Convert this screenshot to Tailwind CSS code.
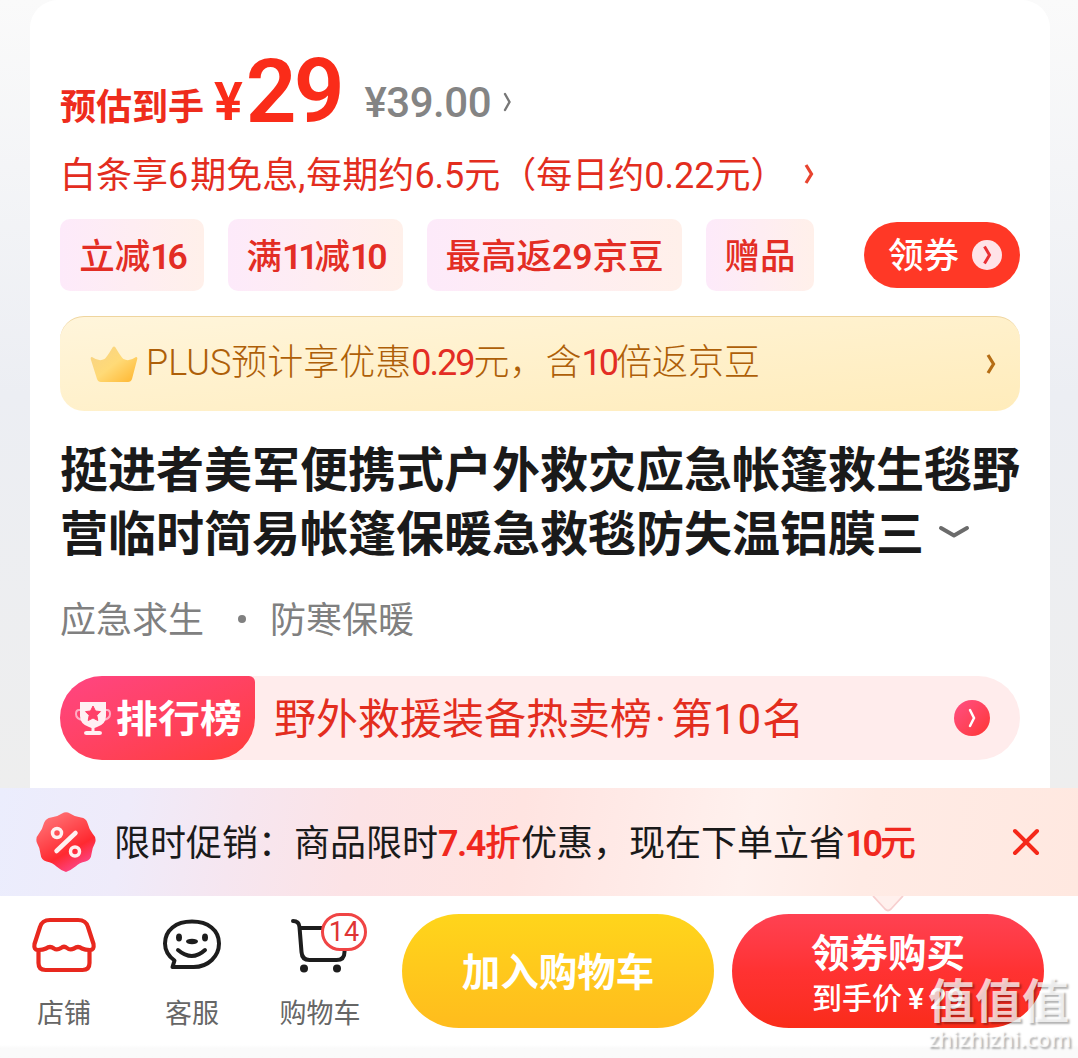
<!DOCTYPE html>
<html lang="zh-CN">
<head>
<meta charset="utf-8">
<title>商品详情</title>
<script src="https://cdn.jsdelivr.net/npm/@tailwindcss/browser@4"></script>
</head>
<body class="w-[1078px] h-[1058px] overflow-hidden whitespace-nowrap bg-white font-['Noto_Sans_CJK_SC',sans-serif]">
<div class="relative flex h-[1058px] flex-col">
  <main class="h-[788px] bg-linear-to-b from-[#fafafa] via-[#eceef3] via-50% to-[#eeeeee] pr-[28px] pl-[30px]">
    <section class="flex h-[788px] flex-col rounded-t-[28px] bg-white px-[30px]">
      <!-- price -->
      <div class="flex h-[144px] items-baseline pt-[39px] text-[#fa2c19]">
        <span class="text-[36px] leading-[130px] font-bold text-[#ee2c1c]">预估到手</span>
        <span class="ml-[10px] font-[Roboto] text-[54px] leading-none font-semibold">¥</span>
        <span class="ml-[3px] translate-y-[2px] font-[Roboto] text-[89px] leading-none font-semibold tracking-[-3px]">29</span>
        <span class="ml-[23px] translate-y-[-3px] font-[Roboto] text-[42px] leading-none font-medium tracking-[-0.500px] text-[#848484]">¥39.00</span>
        <svg class="mt-[53px] ml-[12px] self-start" width="9" height="20" viewBox="0 0 9 20" fill="none" stroke="#777" stroke-width="2.4" stroke-linecap="round"><path d="M2 2l4.500 8L2 18"/></svg>
      </div>
      <!-- instalments -->
      <div class="flex h-[60px] items-center text-[36px] leading-[60px] text-[#e32d1e]">
        <span>白条享<span class="font-[Roboto] tracking-[2px]">6</span>期免息<span class="font-[Roboto] tracking-[1px]">,</span>每期约<span class="font-[Roboto]">6.5</span>元（每日约<span class="font-[Roboto]">0.22</span>元）</span>
        <svg class="ml-[17px]" width="11" height="20" viewBox="0 0 11 20" fill="none" stroke="#e8442f" stroke-width="3.200"><path d="M2 1l5.500 9L2 19"/></svg>
      </div>
      <!-- coupons -->
      <div class="mt-[15px] flex h-[72px] items-center gap-6 text-[35.500px] leading-[69px] font-medium text-[#e32d24]">
        <span class="h-[72px] w-[144px] rounded-[10px] bg-linear-to-r from-[#fdeafa] to-[#fff0ea] text-center">立减<span class="font-[Roboto] font-semibold tracking-[-3px]">16</span></span>
        <span class="h-[72px] w-[175px] rounded-[10px] bg-linear-to-r from-[#fdeafa] to-[#fff0ea] text-center">满<span class="font-[Roboto] font-semibold tracking-[-4px]">11</span>减<span class="font-[Roboto] font-semibold tracking-[-3px]">10</span></span>
        <span class="h-[72px] w-[255px] rounded-[10px] bg-linear-to-r from-[#fdeafa] to-[#fff0ea] text-center">最高返<span class="font-[Roboto] font-semibold">29</span>京豆</span>
        <span class="h-[72px] w-[108px] rounded-[10px] bg-linear-to-r from-[#fdeafa] to-[#fff0ea] text-center">赠品</span>
        <span class="ml-auto flex h-[66px] w-[156px] items-center rounded-full bg-[#ff3826] pl-[24px] text-white">
          <span class="pb-1 leading-[62px]">领券</span>
          <svg class="ml-[13px]" width="30" height="30" viewBox="0 0 30 30" fill="none"><circle cx="15" cy="15" r="15" fill="#ffe3e8"/><path d="M12.500 6.500l5 8.500-5 8.500" stroke="#e92f34" stroke-width="3"/></svg>
        </span>
      </div>
      <!-- PLUS -->
      <div class="mt-[25px] flex h-[95px] items-center rounded-[24px] border-t border-[#efd59e] bg-linear-to-br from-[#fff5db] to-[#ffecbb] pr-[23px] pl-[30px] text-[36px] leading-[88px] font-light text-[#ae5f08]">
        <svg width="48" height="37" viewBox="0 0 48 37"><defs><linearGradient id="crown" x1="0" y1="0" x2="1" y2="1"><stop offset="0" stop-color="#f7d286"/><stop offset=".5" stop-color="#ffda77"/><stop offset="1" stop-color="#ffb52d"/></linearGradient></defs><path d="M2 11q7 5 12.500 2Q17 11 22.500 1.500q1.500-2 3 0Q31 11 33.500 13q5.500 3 12.500-2 2 0 1 3l-5 19q-1 3-4 3H11q-3 0-4-3L1 14q-1-3 1-3Z" fill="url(#crown)"/></svg>
        <span class="ml-[8px] pb-[6px]"><span class="font-[Roboto]">PLUS</span>预计享优惠<span class="font-[Roboto] font-normal tracking-[-2px] text-[#e32d24]">0.29</span>元，含<span class="font-[Roboto] font-normal tracking-[-3px] text-[#e32d24]">10</span>倍返京豆</span>
        <svg class="ml-auto" width="11" height="20" viewBox="0 0 11 20" fill="none" stroke="#b56d15" stroke-width="3.200"><path d="M2 1l5.500 9L2 19"/></svg>
      </div>
      <!-- title -->
      <h1 class="mt-[23px] flex h-[128px] flex-col text-[48px] leading-[64px] font-bold text-[#1a1a1a]">
        <span>挺进者美军便携式户外救灾应急帐篷救生毯野</span>
        <span class="flex items-center">营临时简易帐篷保暖急救毯防失温铝膜三
          <svg class="mt-[4px] ml-[14px]" width="32" height="14" viewBox="0 0 32 14" fill="none" stroke="#6b6b6b" stroke-width="4" stroke-linecap="round" stroke-linejoin="round"><path d="M3 3l13 7.500L29 3"/></svg>
        </span>
      </h1>
      <div class="mt-[22px] flex h-[66px] items-center text-[36px] leading-[66px] text-[#808080]">
        <span>应急求生</span><i class="mt-[4px] ml-[34px] size-[8px] rounded-full bg-[#808080]"></i><span class="ml-[24px]">防寒保暖</span>
      </div>
      <!-- ranking -->
      <div class="mt-[26px] flex h-[84px] items-center rounded-full bg-[#ffecec] pr-[30px]">
        <div class="flex h-[84px] w-[195px] items-center rounded-l-[42px] rounded-tr-[6px] rounded-br-[42px] bg-linear-to-br from-[#ff4582] to-[#ff3c37] pl-[15px] text-white">
          <svg width="36" height="35" viewBox="0 0 36 35" fill="none"><path d="M7 9H4q-3 0-3 4 0 5 7 6M29 9h3q3 0 3 4 0 5-7 6" stroke="#ffadc4" stroke-width="2"/><path d="M5 1h26v14q0 8-9 11l-2.500 1v3h5q2.500 0 2.500 2t-2.500 2h-13q-2.500 0-2.500-2t2.500-2h5v-3L14 26Q5 23 5 15Z" fill="#fff0f3"/><path d="M18 5l2.500 5 5 .6-3.700 3.700 1 5.200-4.800-2.500-4.800 2.500 1-5.200-3.700-3.700 5-.6Z" fill="#ff4068" stroke="#ff4068" stroke-linejoin="round"/></svg>
          <span class="ml-[5px] scale-y-90 pb-[4px] text-[42px] leading-[80px] font-bold">排行榜</span>
        </div>
        <span class="ml-[19px] text-[42px] leading-[84px] text-[#e32d1e]">野外救援装备热卖榜<span class="ml-[3px] font-[Roboto]">·</span></span><span class="ml-[5px] text-[42px] leading-[84px] text-[#e32d1e]">第<span class="font-[Roboto] tracking-[1px]">10</span>名</span>
        <span class="ml-auto flex size-[36px] items-center justify-center rounded-full bg-linear-to-br from-[#ff4f83] to-[#ff332c]"><svg width="12" height="20" viewBox="0 0 12 20" fill="none" stroke="#fff" stroke-width="2.500" stroke-linecap="round"><path d="M4 2l4 8-4 8"/></svg></span>
      </div>
    </section>
  </main>

  <!-- promotion -->
  <aside class="flex h-[108px] items-center bg-linear-[100deg,#ebedfd_0%,#efebfa_12%,#f6e6f0_22%,#fce3e6_33%,#ffe4e1_48%,#ffebe8_60%,#fff1ee_69%,#ffebe5_80%,#ffe8e0_100%] pr-[36px] pl-[36px] text-[36px] leading-[108px] text-[#1a1a1a]">
    <svg width="60" height="60" viewBox="0 0 60 60"><defs><linearGradient id="seal" x1=".2" y1="0" x2=".75" y2="1"><stop offset="0" stop-color="#ff777a"/><stop offset=".65" stop-color="#ff2930"/><stop offset="1" stop-color="#fc4b9b"/></linearGradient></defs><path d="M26 1.500q4-2.500 8 0 5 3.500 11 4 5 .5 6.500 5.500 1.500 6 5 10.500Q61 26 59 31q-3 5-3.500 11-.5 6-6 7.500-6 1-10 5-5 4-9.500 5.500-5-1.500-9.500-5.500-4-4-10-5-5.500-1.500-6-7.500Q4 36 1 31q-2-5 2-9.500 3.500-4.500 5-10.500Q10 6 15 5.500q6-.5 11-4Z" fill="url(#seal)"/><g fill="none" stroke="#fff0f0" stroke-linecap="round"><path d="M39.500 21l-19 18" stroke-width="4.500"/><circle cx="21" cy="21" r="4.500" stroke-width="3.500"/><circle cx="39" cy="39.500" r="4.500" stroke-width="3.500"/></g></svg>
    <span class="ml-[18px]">限时促销：商品限时<span class="text-[#f0281e]"><span class="font-[Roboto] font-semibold tracking-[-1.500px]">7.4</span><span class="font-medium">折</span></span>优惠，现在下单立省<span class="text-[#f0281e]"><span class="font-[Roboto] font-semibold tracking-[-3px]">10</span><span class="font-medium">元</span></span></span>
    <svg class="ml-auto" width="32" height="28" viewBox="0 0 32 28" stroke="#f52819" stroke-width="4" stroke-linecap="round"><path d="M5 3l22 22M27 3L5 25"/></svg>
  </aside>

  <!-- action bar -->
  <footer class="relative flex h-[162px] bg-linear-to-b from-white from-92% to-[#fafafa] to-94%">
    <nav class="flex h-[162px] w-[384px] text-[27px] leading-[36px] text-[#666]">
      <a class="flex w-[128px] flex-col items-center pt-[20px]">
        <svg width="66" height="58" viewBox="0 0 66 58" fill="none" stroke="#e8281e" stroke-width="4.200" stroke-linecap="round" stroke-linejoin="round"><path d="M19 4h28q8 0 10 7l5.500 17q1 6-3.500 6-5 0-8-1.500-4-3-8 0-4 2-7-.500-3-2.500-6 0-4 2.500-7 .500-4-3-8 0-3 1.500-8 1.500-4.500 0-3.500-6L9 11q2-7 10-7Z"/><path d="M7.500 35v12q0 7 7 7h37q7 0 7-7V35"/></svg>
        <span class="mt-[20px]">店铺</span>
      </a>
      <a class="flex w-[128px] flex-col items-center pt-[20px]">
        <svg width="60" height="58" viewBox="0 0 60 58" fill="none" stroke="#1d1d1d" stroke-width="4" stroke-linecap="round" stroke-linejoin="round"><path d="M10.500 51h21C46.500 51 57 40 57 27.500 57 14 46 5.500 30 5.500S3 14 3 27.500c0 8 4 13 9.500 17Z"/><path d="M16 34q14 12 27 0"/><g fill="#1d1d1d" stroke="none"><ellipse cx="17" cy="21.500" rx="3" ry="4"/><ellipse cx="43" cy="21.500" rx="3" ry="4"/><ellipse cx="30" cy="25.500" rx="6" ry="2.700"/></g></svg>
        <span class="mt-[20px]">客服</span>
      </a>
      <a class="relative flex w-[128px] flex-col items-center pt-[20px]">
        <svg width="58" height="58" viewBox="0 0 58 58" fill="none" stroke="#1d1d1d" stroke-width="4" stroke-linecap="round" stroke-linejoin="round"><path d="M2 5q6 0 6.500 6l2 25q.5 8 8 8h27q8 0 8-8l1-24L9 12"/><g fill="#1d1d1d" stroke="none"><circle cx="13" cy="52.500" r="4"/><circle cx="46" cy="52.500" r="4"/></g></svg>
        <span class="mt-[20px]">购物车</span>
        <b class="absolute top-[17px] left-[65px] flex h-[38px] w-[46px] items-center justify-center rounded-full border-[3px] border-[#f04444] bg-white font-[Roboto] text-[27px] font-normal text-[#df3434]">14</b>
      </a>
    </nav>
    <button class="mt-[18px] ml-[18px] h-[114px] w-[312px] rounded-full bg-linear-to-b from-[#ffd51b] to-[#ffbc1d] pb-[4px] text-[38.500px] leading-[110px] font-bold text-white">加入购物车</button>
    <button class="mt-[18px] ml-[18px] flex h-[114px] w-[312px] flex-col items-center rounded-full bg-linear-to-b from-[#ff4152] via-[#ff3232] via-50% to-[#fa2c19] text-white">
      <span class="mt-[9px] text-[38.500px] leading-[54px] font-bold">领券购买</span>
      <span class="text-[30px] leading-[38px] font-medium">到手价<span class="ml-[6px] font-[Roboto] tracking-[2px]">¥</span><span class="ml-[4px] font-[Roboto] font-semibold">29</span></span>
    </button>
    <svg class="absolute top-0 left-[872px]" width="32" height="16" viewBox="0 0 32 16"><path d="M1 0l12 13q3 3 6 0L31 0" fill="#fff0ed" stroke="#f7cfcf" stroke-width="1.800"/></svg>
    <div class="absolute top-[71px] left-[928px] flex w-[148px] flex-col text-white/75 [text-shadow:2px_2px_2px_rgb(0_0_0/0.3)]">
      <span class="text-[47px] leading-[62px] font-bold">值值值</span>
      <span class="mt-[-5px] font-['Open_Sans'] text-[22px] leading-[28px] font-semibold">zhizhizhi.com</span>
    </div>
  </footer>
</div>
</body>
</html>
